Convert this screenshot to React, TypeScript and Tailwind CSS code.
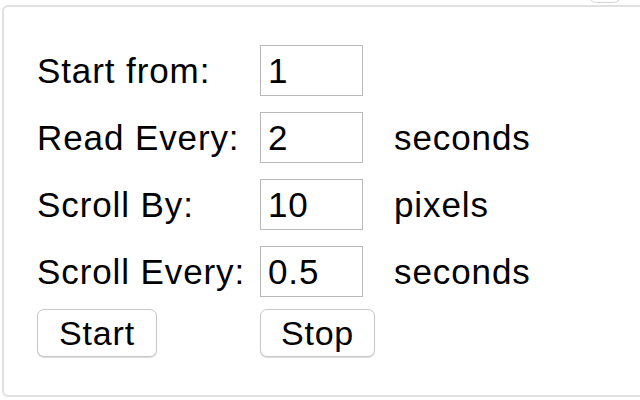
import React from "react";

const rows = [
  { label: "Start from:", value: "1", unit: "" },
  { label: "Read Every:", value: "2", unit: "seconds" },
  { label: "Scroll By:", value: "10", unit: "pixels" },
  { label: "Scroll Every:", value: "0.5", unit: "seconds" },
];

const App: React.FC = () => {
  return (
    <div
      className="relative w-[640px] h-[400px] bg-white overflow-hidden text-black"
      style={{ fontFamily: '"Liberation Sans", Arial, sans-serif' }}
    >
      {/* bit of the browser bar peeking in */}
      <div className="absolute left-[588px] top-[-14px] w-[34px] h-[17px] rounded-full border border-gray-300 bg-white" />
      <div className="ml-[2px] mt-[5px] w-[660px] h-[392px] border-2 border-[#e0e0e0] rounded-[6px] bg-white pl-[33px] pt-[38px]">
        <div className="flex flex-col gap-[16px]">
          {rows.map((r) => (
            <div key={r.label} className="flex items-center h-[51px]">
              <span className="w-[223px] text-[35px] tracking-[0.9px] leading-none">
                {r.label}
              </span>
              <input
                type="text"
                defaultValue={r.value}
                className="w-[103px] h-[51px] border border-[#b9b9b9] px-[7px] text-[35px] tracking-[0.9px] leading-none outline-none"
              />
              {r.unit && (
                <span className="ml-[31px] text-[35px] tracking-[0.9px] leading-none">
                  {r.unit}
                </span>
              )}
            </div>
          ))}
        </div>
        <div className="flex mt-[12px]">
          <button
            type="button"
            className="w-[120px] h-[48px] rounded-[7px] border border-[#c8c8c8] shadow-[0_1px_1px_rgba(0,0,0,0.15)] bg-white text-[34px] tracking-[0.8px] leading-none"
          >
            Start
          </button>
          <button
            type="button"
            className="ml-[103px] w-[115px] h-[48px] rounded-[7px] border border-[#c8c8c8] shadow-[0_1px_1px_rgba(0,0,0,0.15)] bg-white text-[34px] tracking-[0.8px] leading-none"
          >
            Stop
          </button>
        </div>
      </div>
    </div>
  );
};

export default App;
